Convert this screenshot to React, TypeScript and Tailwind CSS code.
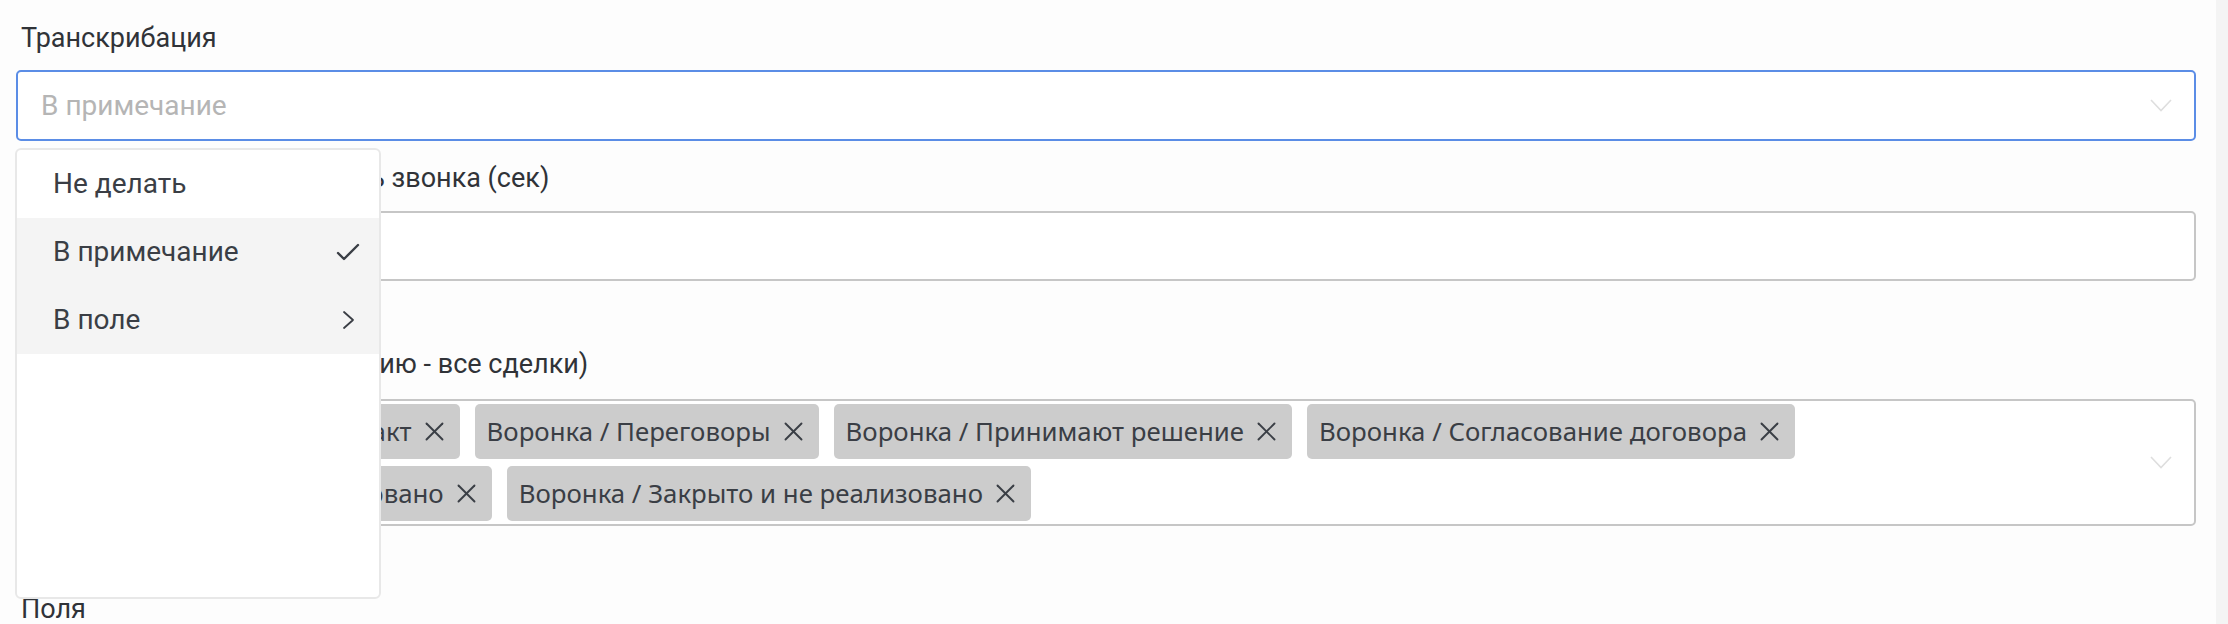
import React from 'react';

const font = { fontFamily: 'Roboto, "Noto Sans", sans-serif' };
const chipFont = { fontFamily: '"Noto Sans", "Open Sans", sans-serif' };

const ChevronDown = () => (
  <svg width="22" height="13" viewBox="0 0 22 13" fill="none" stroke="#dedede" strokeWidth="1.6">
    <polyline points="1,1 11,11.5 21,1" />
  </svg>
);

const CloseIcon = () => (
  <svg width="19" height="19" viewBox="0 0 19 19" fill="none" stroke="#3a3e45" strokeWidth="1.9" strokeLinecap="round">
    <line x1="1.5" y1="1.5" x2="17.5" y2="17.5" />
    <line x1="17.5" y1="1.5" x2="1.5" y2="17.5" />
  </svg>
);

const CheckIcon = () => (
  <svg width="24" height="18" viewBox="0 0 24 18" fill="none" stroke="#3a3e45" strokeWidth="2.4" strokeLinecap="round" strokeLinejoin="round">
    <polyline points="2,10 8,16 22,2" />
  </svg>
);

const ChevronRight = () => (
  <svg width="13" height="20" viewBox="0 0 13 20" fill="none" stroke="#3a3e45" strokeWidth="1.8" strokeLinecap="round" strokeLinejoin="round" className="mr-[5px]">
    <polyline points="2,2 11,10 2,18" />
  </svg>
);

const stages = [
  'Воронка / Первичный контакт',
  'Воронка / Переговоры',
  'Воронка / Принимают решение',
  'Воронка / Согласование договора',
  'Воронка / Успешно реализовано',
  'Воронка / Закрыто и не реализовано',
];

const Chip = ({ text }: { text: string }) => (
  <div
    className="flex h-[55px] items-center gap-[13px] rounded-[5px] bg-[#cccccc] pl-[12px] pr-[16px] text-[25.8px] text-[#3a3e45]"
    style={chipFont}
  >
    <span className="whitespace-nowrap">{text}</span>
    <CloseIcon />
  </div>
);

const menuItems = [
  { label: 'Не делать', active: false, icon: null },
  { label: 'В примечание', active: true, icon: <CheckIcon /> },
  { label: 'В поле', active: true, icon: <ChevronRight /> },
];

export default function App() {
  return (
    <div className="flex h-[624px] w-full overflow-hidden bg-[#fdfdfd]" style={font}>
      <div className="flex-1 pl-[16px] pr-[20px] pt-[18px]">
        <div className="pl-[5px] text-[27px] leading-[40px] text-[#303338]">Транскрибация</div>

        <div className="relative mt-[12px]">
          <div className="flex h-[71px] items-center justify-between rounded-[5px] border-2 border-[#5b8de6] bg-white pl-[23px] pr-[22px]">
            <span className="text-[28px] text-[#b5b5b5]">В примечание</span>
            <ChevronDown />
          </div>

          <div className="absolute left-[-1px] top-[calc(100%+7px)] z-10 h-[451px] w-[366px] rounded-[6px] border-2 border-[#e8e8e8] bg-white">
            {menuItems.map((item) => (
              <div
                key={item.label}
                className={`flex h-[68px] items-center justify-between pl-[36px] pr-[19px] text-[28px] text-[#3a3e45] ${
                  item.active ? 'bg-[#f4f4f4]' : ''
                }`}
              >
                <span>{item.label}</span>
                {item.icon}
              </div>
            ))}
          </div>
        </div>

        <div className="mt-[17px] pl-[5px] text-[27px] leading-[40px] text-[#303338]">
          Минимальная длительность звонка (сек)
        </div>
        <div className="mt-[13px] h-[70px] rounded-[5px] border-2 border-[#c6c6c6] bg-white" />

        <div className="mt-[63px] pl-[5px] text-[27px] leading-[40px] text-[#303338]">
          Этапы воронки (по умолчанию - все сделки)
        </div>
        <div className="mt-[15px] flex items-center rounded-[5px] border-2 border-[#c6c6c6] bg-white p-[3px] pr-[22px]">
          <div className="flex flex-1 flex-wrap gap-x-[15px] gap-y-[7px] pr-[60px]">
            {stages.map((s) => (
              <Chip key={s} text={s} />
            ))}
          </div>
          <ChevronDown />
        </div>

        <div className="mt-[63px] pl-[5px] text-[27px] leading-[40px] text-[#303338]">Поля</div>
      </div>
      <div className="w-[12px] bg-[#f4f4f4]" />
    </div>
  );
}
